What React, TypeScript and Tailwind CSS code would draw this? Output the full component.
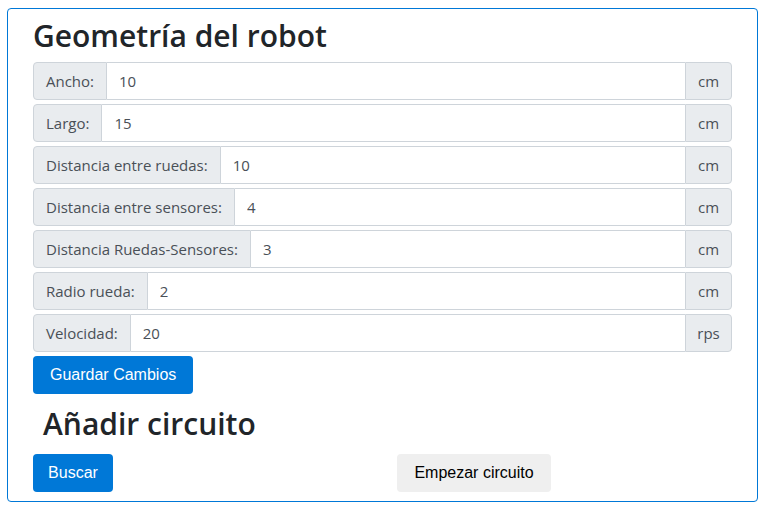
import React from 'react'

const Campo = ({ label, value, unit }: { label: string; value: string; unit: string }) => {
  return (
    <div className="flex h-[38px] w-full">
      <span className="flex items-center px-3 bg-[#e9ecef] border border-[#ced4da] rounded-l text-[#495057] whitespace-nowrap">
        {label}
      </span>
      <input
        defaultValue={value}
        className="flex-1 min-w-0 px-3 border-y border-[#ced4da] text-[#495057] bg-white outline-none"
      />
      <span className="flex items-center justify-center w-[47px] bg-[#e9ecef] border border-[#ced4da] rounded-r text-[#495057]">
        {unit}
      </span>
    </div>
  )
}

const App = () => {
  const campos = [
    { label: 'Ancho:', value: '10', unit: 'cm' },
    { label: 'Largo:', value: '15', unit: 'cm' },
    { label: 'Distancia entre ruedas:', value: '10', unit: 'cm' },
    { label: 'Distancia entre sensores:', value: '4', unit: 'cm' },
    { label: 'Distancia Ruedas-Sensores:', value: '3', unit: 'cm' },
    { label: 'Radio rueda:', value: '2', unit: 'cm' },
    { label: 'Velocidad:', value: '20', unit: 'rps' },
  ]

  return (
    <div className="bg-white min-h-screen pt-2 pl-[7px] font-['Open_Sans',sans-serif] text-[15px]">
      <div className="w-[751px] border border-[#0078d7] rounded pl-[25px] pr-[25px] pb-[9px]">
        <h1 className="text-[30px] font-semibold text-[#212529] leading-[52px] mt-[1px]">Geometría del robot</h1>
        <div className="flex flex-col gap-1">
          {campos.map((c, i) => (
            <Campo key={i} {...c} />
          ))}
        </div>
        <button className="mt-1 h-[38px] px-[17px] bg-[#0078d7] text-white rounded font-['Liberation_Sans',sans-serif] text-[16px]">
          Guardar Cambios
        </button>
        <h2 className="ml-[10px] text-[30px] font-semibold text-[#212529] leading-[60px]">Añadir circuito</h2>
        <div className="flex">
          <button className="h-[38px] w-[80px] bg-[#0078d7] text-white rounded font-['Liberation_Sans',sans-serif] text-[16px]">
            Buscar
          </button>
          <button className="ml-[284px] h-[38px] w-[154px] bg-[#efefef] text-black rounded font-['Liberation_Sans',sans-serif] text-[16px]">
            Empezar circuito
          </button>
        </div>
      </div>
    </div>
  )
}

export default App
